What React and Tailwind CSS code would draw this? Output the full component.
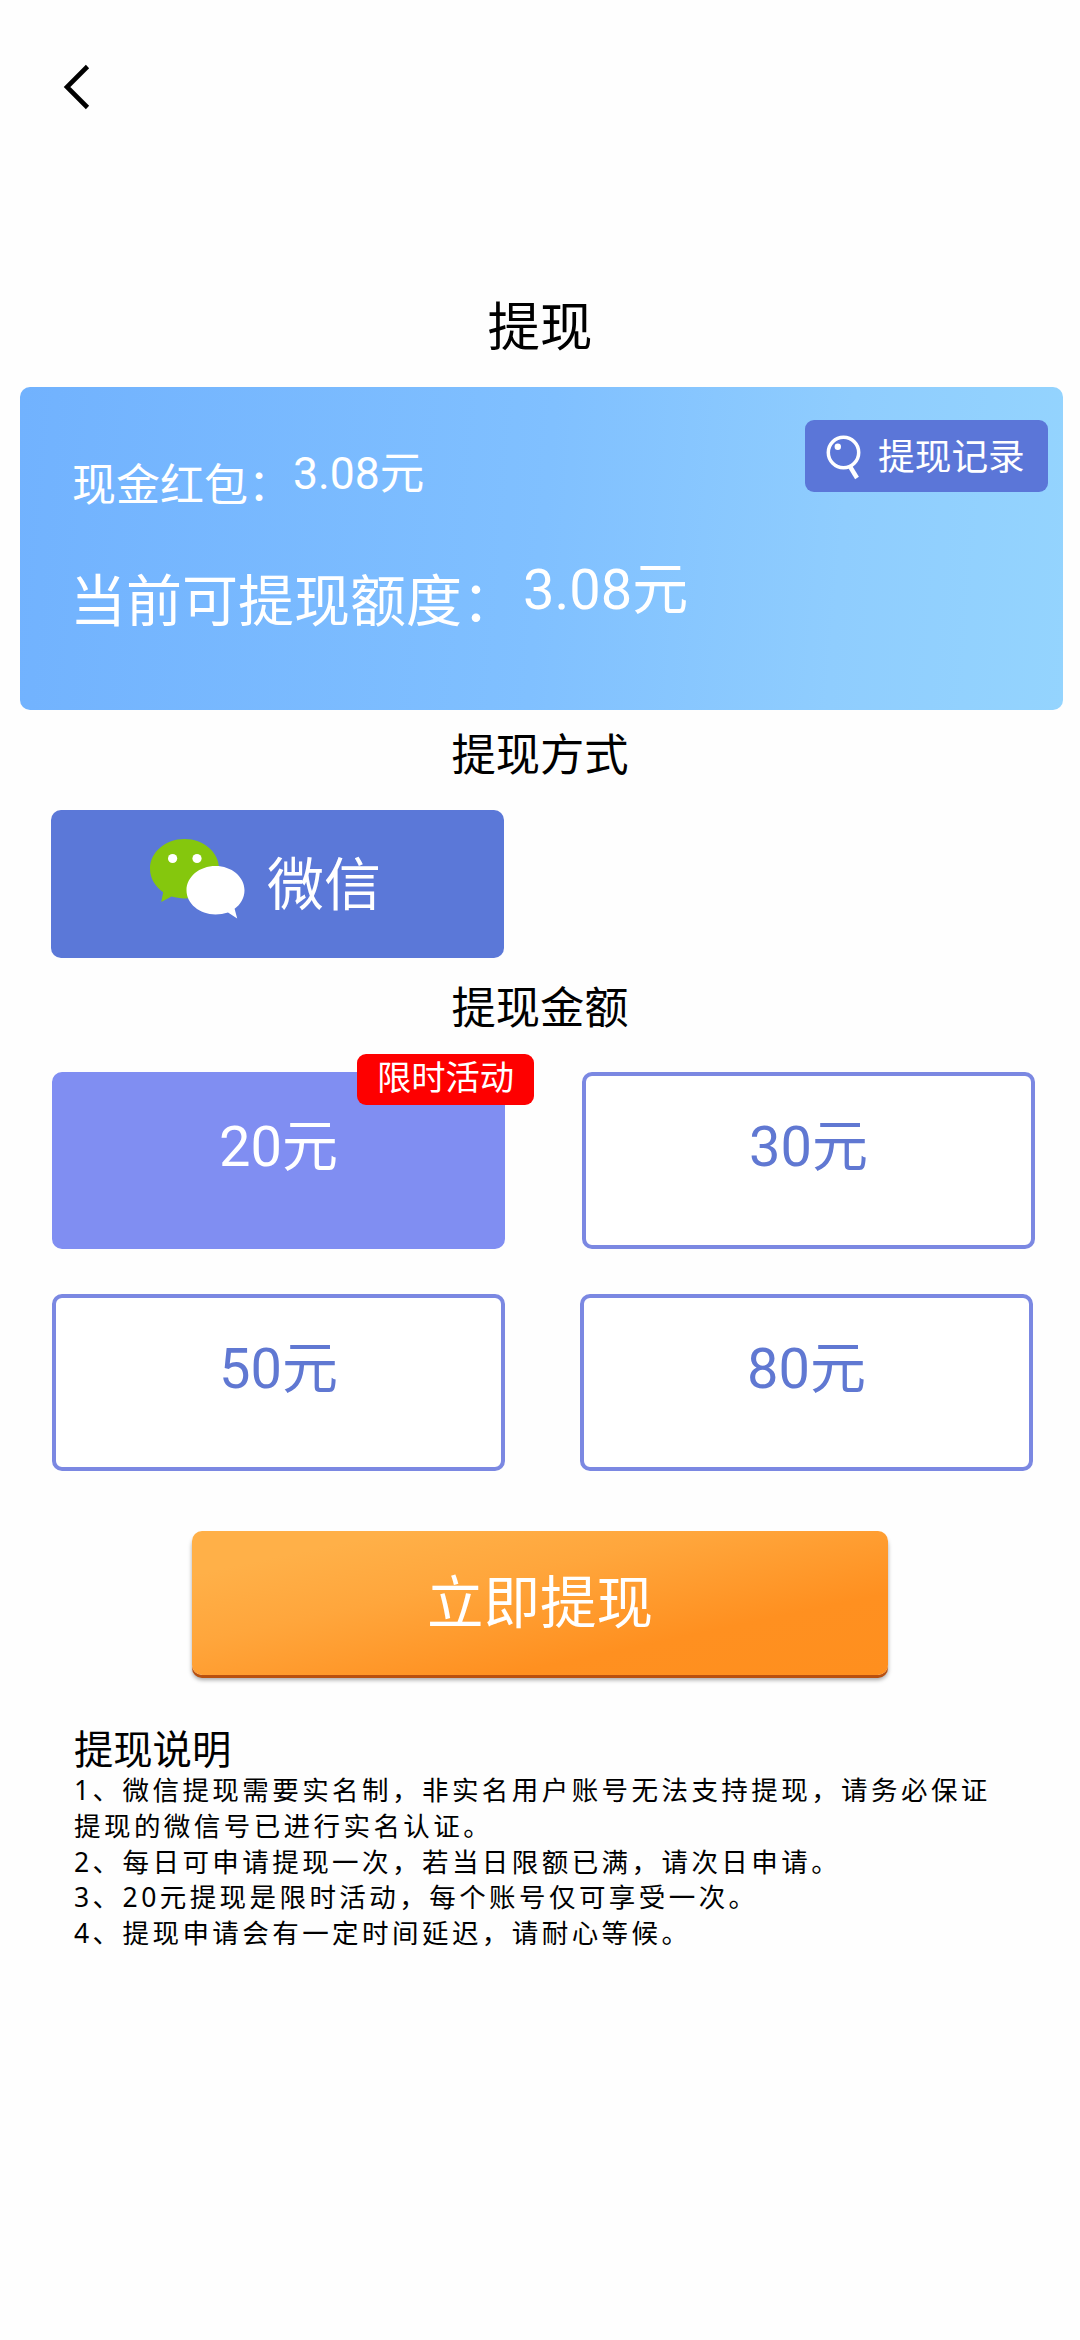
import React, { useState } from 'react';

const amounts = [
    { id: 20, label: '20元', tag: '限时活动', offset: 'ml-0' },
    { id: 30, label: '30元', offset: 'ml-0' },
    { id: 50, label: '50元', offset: 'ml-0' },
    { id: 80, label: '80元', offset: '-ml-0.5' },
];

const notes = [
    '1、微信提现需要实名制，非实名用户账号无法支持提现，请务必保证提现的微信号已进行实名认证。',
    '2、每日可申请提现一次，若当日限额已满，请次日申请。',
    '3、20元提现是限时活动，每个账号仅可享受一次。',
    '4、提现申请会有一定时间延迟，请耐心等候。',
];

const BackIcon = () => (
    <svg width="28" height="46" viewBox="0 0 28 46" fill="none">
        <path d="M25.5 2.5L5 23L25.5 43.5" stroke="#000" strokeWidth="4.6" />
    </svg>
);

const SearchIcon = () => (
    <svg width="36" height="45" viewBox="0 0 36 45" fill="none" stroke="#fff">
        <circle cx="17.5" cy="17.5" r="15.2" strokeWidth="3.5" />
        <path d="M24 31.5L31 43" strokeWidth="4.4" />
        <circle cx="11.8" cy="11.7" r="3.2" fill="#fff" stroke="none" />
    </svg>
);

const WechatIcon = () => (
    <svg width="95" height="80" viewBox="0 0 95 80">
        <path
            d="M34.5 0C15.5 0 0 13.2 0 29.6C0 39.5 5.2 47.8 13.2 53.2L11.2 63L21.5 57.6C25.6 58.8 30 59.4 34.5 59.4C53.5 59.4 69 46 69 29.6C69 13.2 53.5 0 34.5 0Z"
            fill="#85c70d"
        />
        <circle cx="22.6" cy="19.5" r="4.6" fill="#fff" />
        <circle cx="47" cy="19.5" r="4.6" fill="#fff" />
        <path
            d="M65.5 27C49.5 27 36.5 37.8 36.5 51.2C36.5 64.6 49.5 75.4 65.5 75.4C69.8 75.4 74 74.9 78 73.6L87.2 79.5L84.6 69.8C90.6 65.4 94.5 58.8 94.5 51.2C94.5 37.8 81.5 27 65.5 27Z"
            fill="#fff"
        />
    </svg>
);

const AmountCard = ({ item, active, onSelect }) => (
    <button
        className={`relative flex h-[177px] w-[453px] justify-center rounded-[10px] border-4 pt-[43px] font-[Roboto,'Noto_Sans_CJK_SC',sans-serif] text-[56px] leading-[57px] ${item.offset} ${
            active ? 'border-[#808ef2] bg-[#808ef2] text-white' : 'border-[#7b88e2] bg-white text-[#6078d2]'
        }`}
        onClick={() => onSelect(item.id)}
    >
        {item.label}
        {item.tag && (
            <span className="absolute -top-[22px] left-[301px] h-[51px] w-[177px] rounded-[9px] bg-[#fe0000] pt-1 text-center font-['Noto_Sans_CJK_SC',sans-serif] text-[34.3px] leading-[34px] text-white">
                {item.tag}
            </span>
        )}
    </button>
);

const App = () => {
    const [selected, setSelected] = useState(20);

    return (
        <div className="flex h-[2340px] w-[1080px] flex-col overflow-hidden bg-[#fefefe] font-['Noto_Sans_CJK_SC',sans-serif] text-black">
            {/* Header */}
            <header className="h-[297px] pt-16 pl-[62px]">
                <button className="block">
                    <BackIcon />
                </button>
            </header>
            <h1 className="text-center text-[52.5px] leading-[52px]">提现</h1>

            {/* Balance */}
            <section className="mt-[38px] ml-5 flex h-[323px] w-[1043px] justify-between rounded-[10px] bg-[linear-gradient(95deg,#71b2fe_0%,#80c0ff_50%,#8fcdfe_78%,#94d4fe_100%)] text-white">
                <div className="pl-[52px]">
                    <div className="flex items-start pt-[65px]">
                        <span className="mt-2 w-[221px] text-[44px] leading-[44px]">现金红包：</span>
                        <span className="font-[Roboto,'Noto_Sans_CJK_SC',sans-serif] text-[44.5px] leading-[45px]">3.08元</span>
                    </div>
                    <div className="mt-[58px] flex items-start">
                        <span className="mt-[7px] -ml-0.5 w-[453px] text-[56px] leading-[56px]">当前可提现额度：</span>
                        <span className="font-[Roboto,'Noto_Sans_CJK_SC',sans-serif] text-[56px] leading-[57px]">3.08元</span>
                    </div>
                </div>
                <button className="mt-[33px] mr-[15px] flex h-[72px] w-[243px] items-start rounded-[9px] bg-[#5b76d8] pt-[15px] pl-[21px]">
                    <SearchIcon />
                    <span className="mt-px ml-4 text-[36.7px] leading-[37px]">提现记录</span>
                </button>
            </section>

            {/* Method */}
            <h2 className="mt-5 text-center text-[44.3px] leading-[44px]">提现方式</h2>
            <button className="mt-9 ml-[51px] flex h-[148px] w-[453px] items-start rounded-[10px] bg-[#5b78d8] pt-[29px] pl-[99px] text-white">
                <WechatIcon />
                <span className="mt-[13px] ml-[22px] text-[57px] leading-[56px]">微信</span>
            </button>

            {/* Amount */}
            <h2 className="mt-[25px] text-center text-[44.3px] leading-[44px]">提现金额</h2>
            <div className="mt-[45px] ml-[52px] grid grid-cols-[453px_453px] gap-x-[77px] gap-y-[45px]">
                {amounts.map((item) => (
                    <AmountCard key={item.id} item={item} active={selected === item.id} onSelect={setSelected} />
                ))}
            </div>

            <button className="mx-auto mt-[60px] flex h-[144px] w-[696px] shrink-0 justify-center rounded-[10px] bg-[linear-gradient(168deg,#ffb048_15%,#ffa63c_38%,#ff9020_72%,#ff8f1e_100%)] pt-[39px] text-[56.5px] leading-[56px] text-white shadow-[0_3px_0_#b9500f,0_5px_4px_rgba(0,0,0,0.35)]">
                立即提现
            </button>

            {/* Notes */}
            <section className="mt-[52px] ml-[74px] w-[927px]">
                <h3 className="text-[39.3px] leading-[39px]">提现说明</h3>
                <ul className="mt-[7px] font-['Noto_Sans','Noto_Sans_CJK_SC',sans-serif] text-[26.5px] leading-[35.75px] tracking-[3.44px]">
                    {notes.map((note) => (
                        <li key={note}>{note}</li>
                    ))}
                </ul>
            </section>
        </div>
    );
};

export default App;
